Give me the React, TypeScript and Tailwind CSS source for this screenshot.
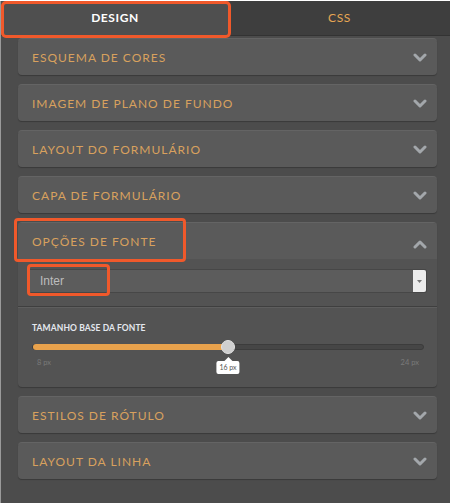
import React from 'react'

const font = { fontFamily: 'Lato, "Open Sans", sans-serif' }

function Chevron({ up = false }: { up?: boolean }) {
  return (
    <svg width="14" height="10" viewBox="0 0 14 10" className="shrink-0">
      <polyline
        points={up ? '2,8 7,3 12,8' : '2,3 7,8 12,3'}
        fill="none"
        stroke="#a3a7ab"
        strokeWidth="3"
        strokeLinecap="round"
        strokeLinejoin="round"
      />
    </svg>
  )
}

function Section({ title }: { title: string }) {
  return (
    <div className="h-[37px] rounded-[4px] bg-[#5a5a5a] border-t border-[#646464] shadow-[0_1px_1px_rgba(0,0,0,0.25)] flex items-center justify-between pl-[14px] pr-[10px]">
      <span className="text-[12px] tracking-[1px] text-[#d8a15e] pt-px">{title}</span>
      <Chevron />
    </div>
  )
}

export default function App() {
  return (
    <div className="w-[453px] h-[503px] bg-white pt-px pr-[3px]" style={font}>
      <div className="relative h-full bg-[#4c4c4c] border-l border-[#9a9a9a]">
        {/* tabs */}
        <div className="flex h-[35px] border-b border-[#333]">
          <div className="w-[228px] bg-[#4f4f4f] flex items-center justify-center text-[12px] font-bold tracking-[0.6px] text-white">
            DESIGN
          </div>
          <div className="flex-1 bg-[#3e3e3e] flex items-center justify-center text-[12px] tracking-[0.6px] text-[#e6a653]">
            CSS
          </div>
        </div>

        <div className="flex flex-col gap-[9px] pl-[17px] pr-[13px] pt-[2px]">
          <Section title="ESQUEMA DE CORES" />
          <Section title="IMAGEM DE PLANO DE FUNDO" />
          <Section title="LAYOUT DO FORMULÁRIO" />
          <Section title="CAPA DE FORMULÁRIO" />

          {/* expanded */}
          <div className="rounded-[4px] bg-[#535353] border-t border-[#646464] shadow-[0_1px_1px_rgba(0,0,0,0.25)] overflow-hidden">
            <div className="h-[36px] bg-[#5a5a5a] flex items-center justify-between pl-[14px] pr-[10px]">
              <span className="text-[12px] tracking-[1px] text-[#d8a15e] pt-px">OPÇÕES DE FONTE</span>
              <div className="pt-[6px]">
                <Chevron up />
              </div>
            </div>
            <div className="px-[10px] pt-[10px] pb-[13px] border-b border-[#3f3f3f]">
              <div className="relative h-[24px] flex bg-[#5c5c5c] border border-[#474747] rounded-[2px]">
                <div className="flex-1 flex items-center pl-[11px] text-[12px] text-[#bdbdbd]" style={{ fontFamily: 'Arial, "Liberation Sans", sans-serif' }}>
                  Inter
                </div>
                <div className="w-[13px] bg-[#ececec] rounded-r-[2px] flex items-center justify-center">
                  <svg width="5" height="3" viewBox="0 0 5 3">
                    <polygon points="0,0 5,0 2.5,3" fill="#777" />
                  </svg>
                </div>
                <div className="absolute left-[-2px] top-[-6px] w-[83px] h-[32px] border-[3px] border-[#f0592b] rounded-[4px]" />
              </div>
            </div>
            <div className="border-t border-[#5e5e5e] pl-[14px] pr-[13px] pt-[16px] pb-[21px]">
              <div className="text-[8.5px] font-bold tracking-[0.1px] text-[#e4e8ee] leading-none">TAMANHO BASE DA FONTE</div>
              <div className="relative mt-[11px] h-[6px] rounded-full bg-[#464646] border border-[#3c3c3c]">
                <div className="absolute left-0 top-[-1px] h-[6px] w-1/2 rounded-full bg-[#e9a24c]" />
                <div className="absolute left-1/2 top-1/2 -translate-x-1/2 -translate-y-1/2 w-[14px] h-[14px] rounded-full bg-[#cfcfcf] border border-[#e2e2e2]" />
              </div>
              <div className="relative flex justify-between mt-[9px] px-[5px] text-[7.5px] text-[#7a7a7a] leading-none">
                <span>8 px</span>
                <span>24 px</span>
                <div className="absolute left-1/2 top-[-2px] -translate-x-1/2">
                  <div className="mx-auto w-0 h-0 border-l-[4px] border-r-[4px] border-b-[4px] border-l-transparent border-r-transparent border-b-white" />
                  <div className="bg-white rounded-[2px] px-[3px] py-[3px] text-[7px] text-[#555] leading-none whitespace-nowrap">16 px</div>
                </div>
              </div>
            </div>
          </div>

          <Section title="ESTILOS DE RÓTULO" />
          <Section title="LAYOUT DA LINHA" />
        </div>

        {/* annotation highlights */}
        <div className="absolute left-0 top-0 w-[230px] h-[37px] border-[3px] border-[#f0592b] rounded-[5px] pointer-events-none" />
        <div className="absolute left-[13px] top-[217px] w-[172px] h-[44px] border-[3px] border-[#f0592b] rounded-[4px] pointer-events-none" />
      </div>
    </div>
  )
}
